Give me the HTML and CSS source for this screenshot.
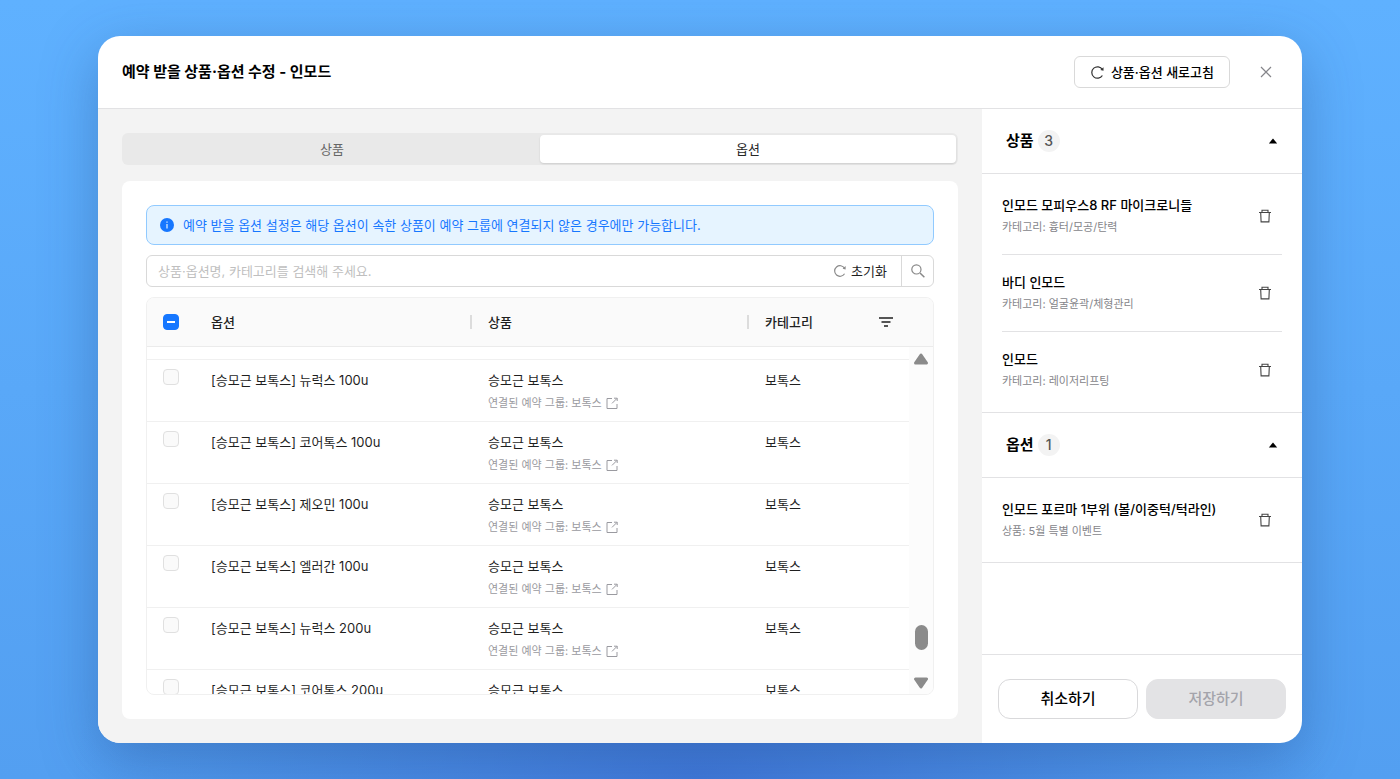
FILE: index.html
```html
<!DOCTYPE html>
<html lang="ko">
<head>
    <meta charset="UTF-8">
    <meta name="viewport" content="width=device-width, initial-scale=1.0">
    <title>예약 받을 상품·옵션 수정</title>
    <link rel="stylesheet" href="styles.css">
</head>
<body>
    <!-- 공통 아이콘 -->
    <svg class="sprite" width="0" height="0">
        <symbol id="reload" viewBox="0 0 16 16">
            <path d="M13.2 11.2A6.1 6.1 0 1 1 13.2 4.8" fill="none" stroke="currentColor" stroke-width="1.3"/>
            <path d="M14.4 2.4v3.8l-3.4-.8z" fill="currentColor"/>
        </symbol>
        <symbol id="trash" viewBox="0 0 14 14">
            <path d="M1 3.5h12M4 3.3V1.2h6v2.1M2.7 3.5l.4 9.4h7.8l.4-9.4" fill="none" stroke="currentColor" stroke-width="1.1"/>
        </symbol>
        <symbol id="link" viewBox="0 0 12 12">
            <path d="M6 1.5H1v10h10V7M8 1.2h3.2V4M11 1.4L6 6.4" fill="none" stroke="currentColor" stroke-width="1"/>
        </symbol>
        <symbol id="up" viewBox="0 0 10 6">
            <path d="M5 .4L9.2 5.6H.8z" fill="currentColor"/>
        </symbol>
    </svg>

    <div class="modal" role="dialog" aria-labelledby="title">
        <header class="modal-head">
            <h1 id="title">예약 받을 상품·옵션 수정 - 인모드</h1>
            <button type="button" class="btn-refresh">
                <svg width="15" height="15"><use href="#reload"/></svg>상품·옵션 새로고침
            </button>
            <button type="button" class="btn-close" aria-label="닫기">
                <svg width="12" height="12" viewBox="0 0 12 12"><path d="M1 1l10 10M11 1L1 11" fill="none" stroke="currentColor" stroke-width="1.2"/></svg>
            </button>
        </header>

        <div class="modal-body">
            <main class="content">
                <div class="tabs">
                    <button type="button" class="tab">상품</button>
                    <button type="button" class="tab on">옵션</button>
                </div>

                <section class="card">
                    <p class="notice">
                        <svg width="14" height="14" viewBox="0 0 14 14"><circle cx="7" cy="7" r="7" fill="#1677ff"/><path d="M7 6v4.5M7 3.4v1.4" stroke="#e6f4ff" stroke-width="1.2"/></svg>
                        예약 받을 옵션 설정은 해당 옵션이 속한 상품이 예약 그룹에 연결되지 않은 경우에만 가능합니다.
                    </p>

                    <form class="search">
                        <input type="text" placeholder="상품·옵션명, 카테고리를 검색해 주세요." aria-label="검색어">
                        <button type="reset" class="btn-reset"><svg width="14" height="14"><use href="#reload"/></svg>초기화</button>
                        <button type="submit" class="btn-search" aria-label="검색">
                            <svg width="14" height="14" viewBox="0 0 14 14"><path d="M9 9l4.4 4.2" stroke="currentColor" stroke-width="1.5"/><circle cx="5.4" cy="5.4" r="4.6" fill="none" stroke="currentColor" stroke-width="1.2"/></svg>
                        </button>
                    </form>

                    <div class="list">
                        <table class="list-head">
                            <colgroup><col class="c-check"><col><col><col class="c-cate"><col class="c-bar"></colgroup>
                            <tr>
                                <th><input type="checkbox" class="check some" aria-label="전체 선택"></th>
                                <th class="split">옵션</th>
                                <th class="split">상품</th>
                                <th>
                                    <div class="cate">카테고리
                                        <button type="button" aria-label="필터"><svg width="14" height="10" viewBox="0 0 14 10"><path d="M0 1h14M2.5 5h9M5 9h4" stroke="currentColor" stroke-width="1.4"/></svg></button>
                                    </div>
                                </th>
                                <th></th>
                            </tr>
                        </table>
                        <div class="list-body">
                            <div class="rows">
                                <table>
                                    <colgroup><col class="c-check"><col><col><col class="c-cate"></colgroup>
                                    <tr class="cut"><td colspan="4"></td></tr>
                                    <tr>
                                        <td><input type="checkbox" class="check" disabled aria-label="뉴럭스 100u"></td>
                                        <td>[승모근 보톡스] 뉴럭스 100u</td>
                                        <td>승모근 보톡스<a href="#">연결된 예약 그룹: 보톡스 <svg width="12" height="12"><use href="#link"/></svg></a></td>
                                        <td>보톡스</td>
                                    </tr>
                                    <tr>
                                        <td><input type="checkbox" class="check" disabled aria-label="코어톡스 100u"></td>
                                        <td>[승모근 보톡스] 코어톡스 100u</td>
                                        <td>승모근 보톡스<a href="#">연결된 예약 그룹: 보톡스 <svg width="12" height="12"><use href="#link"/></svg></a></td>
                                        <td>보톡스</td>
                                    </tr>
                                    <tr>
                                        <td><input type="checkbox" class="check" disabled aria-label="제오민 100u"></td>
                                        <td>[승모근 보톡스] 제오민 100u</td>
                                        <td>승모근 보톡스<a href="#">연결된 예약 그룹: 보톡스 <svg width="12" height="12"><use href="#link"/></svg></a></td>
                                        <td>보톡스</td>
                                    </tr>
                                    <tr>
                                        <td><input type="checkbox" class="check" disabled aria-label="엘러간 100u"></td>
                                        <td>[승모근 보톡스] 엘러간 100u</td>
                                        <td>승모근 보톡스<a href="#">연결된 예약 그룹: 보톡스 <svg width="12" height="12"><use href="#link"/></svg></a></td>
                                        <td>보톡스</td>
                                    </tr>
                                    <tr>
                                        <td><input type="checkbox" class="check" disabled aria-label="뉴럭스 200u"></td>
                                        <td>[승모근 보톡스] 뉴럭스 200u</td>
                                        <td>승모근 보톡스<a href="#">연결된 예약 그룹: 보톡스 <svg width="12" height="12"><use href="#link"/></svg></a></td>
                                        <td>보톡스</td>
                                    </tr>
                                    <tr>
                                        <td><input type="checkbox" class="check" disabled aria-label="코어톡스 200u"></td>
                                        <td>[승모근 보톡스] 코어톡스 200u</td>
                                        <td>승모근 보톡스</td>
                                        <td>보톡스</td>
                                    </tr>
                                </table>
                            </div>
                            <div class="bar">
                                <svg width="16" height="12" viewBox="0 0 16 12"><path d="M8 2l5.5 8h-11z" fill="#8b8b8b" stroke="#8b8b8b" stroke-width="3" stroke-linejoin="round"/></svg>
                                <span class="thumb"></span>
                                <svg width="16" height="12" viewBox="0 0 16 12"><path d="M8 10l5.5-8h-11z" fill="#8b8b8b" stroke="#8b8b8b" stroke-width="3" stroke-linejoin="round"/></svg>
                            </div>
                        </div>
                    </div>
                </section>
            </main>

            <aside class="side">
                <section>
                    <h2>상품 <span class="count">3</span><button type="button" aria-label="상품 접기"><svg width="10" height="6"><use href="#up"/></svg></button></h2>
                    <ul>
                        <li>
                            <div><strong>인모드 모피우스8 RF 마이크로니들</strong><span>카테고리: 흉터/모공/탄력</span></div>
                            <button type="button" aria-label="삭제"><svg width="14" height="14"><use href="#trash"/></svg></button>
                        </li>
                        <li>
                            <div><strong>바디 인모드</strong><span>카테고리: 얼굴윤곽/체형관리</span></div>
                            <button type="button" aria-label="삭제"><svg width="14" height="14"><use href="#trash"/></svg></button>
                        </li>
                        <li>
                            <div><strong>인모드</strong><span>카테고리: 레이저리프팅</span></div>
                            <button type="button" aria-label="삭제"><svg width="14" height="14"><use href="#trash"/></svg></button>
                        </li>
                    </ul>
                </section>
                <section>
                    <h2>옵션 <span class="count">1</span><button type="button" aria-label="옵션 접기"><svg width="10" height="6"><use href="#up"/></svg></button></h2>
                    <ul>
                        <li>
                            <div><strong>인모드 포르마 1부위 (볼/이중턱/턱라인)</strong><span>상품: 5월 특별 이벤트</span></div>
                            <button type="button" aria-label="삭제"><svg width="14" height="14"><use href="#trash"/></svg></button>
                        </li>
                    </ul>
                </section>
                <footer>
                    <button type="button">취소하기</button>
                    <button type="button" disabled>저장하기</button>
                </footer>
            </aside>
        </div>
    </div>
</body>
</html>
```
FILE: styles.css
```css
*{margin:0; padding:0; box-sizing: border-box;}
li{list-style: none;}
a{text-decoration: none;}
button{border: 0; background: none; font: inherit; color: inherit; cursor: pointer;}
svg{display: block; flex: none;}

body{
    height: 100vh;
    padding: 36px 98px;
    background:
        radial-gradient(ellipse 45% 40% at 50% 100%, rgba(50,90,200,0.55), rgba(50,90,200,0)),
        linear-gradient(#5fb1ff, #539ff1);
    font: 13px/22px Inter, "Noto Sans CJK KR", sans-serif;
    color: #1f1f1f;
}
.sprite{position: absolute;}

.modal{
    display: flex; flex-direction: column;
    height: 100%;
    border-radius: 22px;
    background-color: #fff;
    box-shadow: 0 16px 56px rgba(30,70,130,0.36);
    overflow: hidden;
}
.modal-head{
    display: flex; align-items: center;
    height: 73px; padding: 0 24px;
    border-bottom: 1px solid #e2e2e4;
}
.modal-head h1{
    flex: 1;
    font-size: 15px; font-weight: 700;
    color: #000;
}
.btn-refresh{
    display: flex; align-items: center; gap: 6px;
    height: 32px; padding: 0 15px;
    border: 1px solid #d9d9d9; border-radius: 6px;
    font-weight: 500;
    color: #000;
}
.btn-refresh svg{color: #333;}
.btn-close{
    display: flex; align-items: center; justify-content: center;
    width: 24px; height: 24px; margin: 0 0 0 24px;
    color: #85858a;
}
.modal-body{
    flex: 1; min-height: 0;
    display: flex;
}

/* 왼쪽 목록 */
.content{
    flex: 1; min-width: 0;
    display: flex; flex-direction: column; gap: 16px;
    padding: 24px;
    background-color: #f3f3f3;
}
.tabs{
    display: flex;
    padding: 2px;
    border-radius: 6px;
    background-color: #e9e9e9;
}
.tab{
    flex: 1;
    height: 28px;
    border-radius: 4px;
    color: #666;
}
.tab.on{
    background-color: #fff;
    box-shadow: 0 1px 2px rgba(0,0,0,0.12);
    color: #262626;
}
.card{
    flex: 1; min-height: 0;
    display: flex; flex-direction: column; gap: 10px;
    padding: 24px;
    border-radius: 8px;
    background-color: #fff;
}
.notice{
    display: flex; align-items: center; gap: 9px;
    height: 40px; padding: 0 13px;
    border: 1px solid #91caff; border-radius: 8px;
    background-color: #e6f4ff;
    color: #1677ff;
}
.search{
    display: flex;
    height: 32px;
    border: 1px solid #d9d9d9; border-radius: 6px;
}
.search input{
    flex: 1; min-width: 0;
    padding: 0 11px;
    border: 0; outline: 0; background: none;
    font: inherit;
}
.search input::placeholder{color: #bfbfbf;}
.btn-reset{
    display: flex; align-items: center; gap: 4px;
    padding: 0 14px;
}
.btn-reset svg{color: #888;}
.btn-search{
    display: flex; align-items: center; justify-content: center;
    width: 32px;
    border-left: 1px solid #d9d9d9;
    color: #888;
}

.list{
    flex: 1; min-height: 0;
    display: flex; flex-direction: column;
    border: 1px solid #f0f0f0; border-radius: 8px;
    overflow: hidden;
}
table{
    width: 100%;
    table-layout: fixed;
    border-collapse: separate; border-spacing: 0;
}
.c-check{width: 48px;}
.c-cate{width: 160px;}
.c-bar{width: 24px;}
.list-head{background-color: #fafafa;}
th{
    height: 49px; padding: 0 16px;
    border-bottom: 1px solid #ebebeb;
    text-align: left; font-weight: 500;
}
.split{
    background: linear-gradient(#dcdcdc,#dcdcdc) no-repeat right / 2px 14px;
}
.cate{display: flex; justify-content: space-between; align-items: center;}
.list-body{
    flex: 1; min-height: 0;
    display: flex;
}
.rows{flex: 1; overflow: hidden;}
td{
    height: 62px; padding: 9px 16px 5px;
    border-bottom: 1px solid #f0f0f0;
    vertical-align: top;
}
.cut td{height: 13px; padding: 0;}
td a{
    display: flex; align-items: center; gap: 4px;
    font-size: 11px; line-height: 24px;
    color: #9a9aa0;
}
.check{
    display: block;
    appearance: none;
    width: 16px; height: 16px;
    border: 1px solid #e0e0e0; border-radius: 4px;
    background-color: #fafafa;
}
.check.some{
    border-color: #1677ff;
    background: linear-gradient(#fff,#fff) no-repeat center / 8px 2px #1677ff;
}
.bar{
    display: flex; flex-direction: column; align-items: center;
    width: 24px; padding: 6px 0 5px;
    background-color: #fcfcfc;
}
.thumb{
    width: 13px; height: 25px; margin: auto 0 27px;
    border-radius: 7px;
    background-color: #8b8b8b;
}

/* 오른쪽 선택 내역 */
.side{
    display: flex; flex-direction: column;
    width: 320px;
}
.side h2{
    display: flex; align-items: center; gap: 4px;
    height: 65px; padding: 0 24px;
    border-bottom: 1px solid #e2e2e4;
    font-size: 15px; font-weight: 700;
    color: #000;
}
.side h2 button{margin-left: auto;}
.count{
    width: 22px; height: 22px;
    border-radius: 50%;
    background-color: #f3f3f3;
    text-align: center; font-size: 14px; font-weight: 500;
    color: #555;
}
.side ul{
    padding: 4px 20px;
    border-bottom: 1px solid #e2e2e4;
}
.side li{
    display: flex; align-items: center; justify-content: space-between;
    height: 77px; padding-right: 10px;
    border-bottom: 1px solid #e2e2e4;
}
.side li:last-child{height: 76px; border: 0;}
.side li button{color: #444;}
.side strong, .side li span{display: block;}
.side strong{font-weight: 500; color: #000;}
.side li span{font-size: 11px; color: #85858a;}
.side footer{
    display: flex; gap: 8px;
    margin-top: auto; padding: 24px 16px;
    border-top: 1px solid #e2e2e4;
}
.side footer button{
    flex: 1;
    height: 40px;
    border: 1px solid #d9d9db; border-radius: 12px;
    font-size: 15px; font-weight: 500;
    color: #000;
}
.side footer button:disabled{
    border-color: #e3e3e5;
    background-color: #e3e3e5;
    color: #a4a4ab;
}
```
